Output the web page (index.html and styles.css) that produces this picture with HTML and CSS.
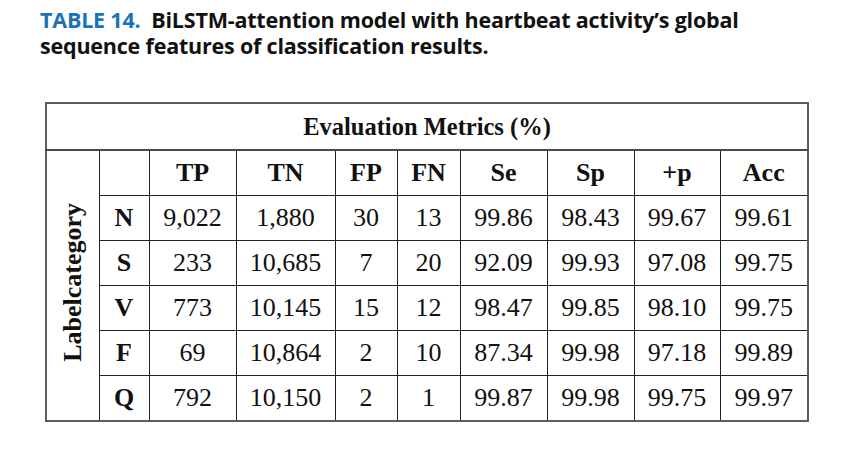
FILE: index.html
```html
<!DOCTYPE html>
<html>
<head>
<meta charset="utf-8">
<link rel="stylesheet" href="styles.css">
</head>
<body>
<div class="page">
  <div class="caption"><p class="line"><span class="tag">TABLE 14.</span>&nbsp; BiLSTM-attention model with heartbeat activity’s global</p><p class="line">sequence features of classification results.</p></div>
  <table class="results">
    <colgroup>
      <col class="c-label"><col class="c-cat"><col class="c-tp"><col class="c-tn"><col class="c-fp"><col class="c-fn"><col class="c-se"><col class="c-sp"><col class="c-pp"><col class="c-acc">
    </colgroup>
    <tr class="r-top"><th colspan="10">Evaluation Metrics (%)</th></tr>
    <tr class="r-head">
      <th rowspan="6" class="label"><span class="vert">Labelcategory</span></th>
      <th></th><th>TP</th><th>TN</th><th>FP</th><th>FN</th><th>Se</th><th>Sp</th><th>+p</th><th>Acc</th>
    </tr>
    <tr><th>N</th><td>9,022</td><td>1,880</td><td>30</td><td>13</td><td>99.86</td><td>98.43</td><td>99.67</td><td>99.61</td></tr>
    <tr><th>S</th><td>233</td><td>10,685</td><td>7</td><td>20</td><td>92.09</td><td>99.93</td><td>97.08</td><td>99.75</td></tr>
    <tr><th>V</th><td>773</td><td>10,145</td><td>15</td><td>12</td><td>98.47</td><td>99.85</td><td>98.10</td><td>99.75</td></tr>
    <tr><th>F</th><td>69</td><td>10,864</td><td>2</td><td>10</td><td>87.34</td><td>99.98</td><td>97.18</td><td>99.89</td></tr>
    <tr><th>Q</th><td>792</td><td>10,150</td><td>2</td><td>1</td><td>99.87</td><td>99.98</td><td>99.75</td><td>99.97</td></tr>
  </table>
</div>
</body>
</html>
```

FILE: styles.css
```css
html, body {
  margin: 0;
  padding: 0;
  background: #ffffff;
}
.page {
  width: 841px;
  height: 451px;
  overflow: hidden;
}
.caption {
  font-family: "Open Sans", "Noto Sans", sans-serif;
  font-weight: 700;
  font-size: 21.5px;
  color: #111;
  margin: 7px 0 0 40px;
  letter-spacing: -0.2px;
}
.caption .line {
  margin: 0;
  height: 26px;
  line-height: 26px;
  white-space: nowrap;
}
.caption .tag {
  color: #1a73b8;
}
.results {
  margin: 43px 0 0 45px;
  border-collapse: collapse;
  table-layout: fixed;
  width: 762px;
  font-family: "Times New Roman", "Liberation Serif", "DejaVu Serif", serif;
  font-size: 26px;
  color: #111;
  border: 2px solid #5e5e5e;
}
.results th, .results td {
  border: 1px solid #222;
  text-align: center;
  vertical-align: middle;
  padding: 0;
  height: 44px;
  line-height: 28px;
}
.results th { font-weight: 700; }
.results td { font-weight: 400; }
.results .r-top th {
  height: 45px;
  font-size: 24.5px;
  border-bottom: 2px solid #4a4a4a;
}
.c-label { width: 53px; }
.c-cat { width: 50px; }
.c-tp { width: 87px; }
.c-tn { width: 99px; }
.c-fp { width: 62px; }
.c-fn { width: 63px; }
.c-se { width: 87px; }
.c-sp { width: 87px; }
.c-pp { width: 86px; }
.c-acc { width: 88px; }
.label .vert {
  display: inline-block;
  writing-mode: vertical-rl;
  transform: rotate(180deg);
  line-height: 28px;
}
```
